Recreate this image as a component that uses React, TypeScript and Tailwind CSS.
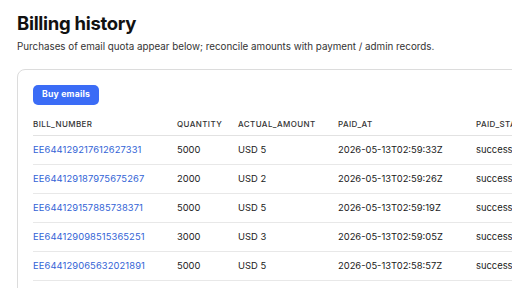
import React from "react";

const rows = [
  ["EE644129217612627331", "5000", "USD 5", "2026-05-13T02:59:33Z", "success"],
  ["EE644129187975675267", "2000", "USD 2", "2026-05-13T02:59:26Z", "success"],
  ["EE644129157885738371", "5000", "USD 5", "2026-05-13T02:59:19Z", "success"],
  ["EE644129098515365251", "3000", "USD 3", "2026-05-13T02:59:05Z", "success"],
  ["EE644129065632021891", "5000", "USD 5", "2026-05-13T02:58:57Z", "success"],
];

export default function App() {
  return (
    <div className="w-[512px] h-[288px] overflow-hidden bg-white text-[#111]" style={{ fontFamily: "Inter, 'Noto Sans', sans-serif" }}>
      <div className="pl-[17px] pt-[12px] w-[640px]">
        <h1 className="text-[18.5px] leading-[23px] font-bold tracking-[-0.3px] text-[#111]">Billing history</h1>
        <p className="mt-[5px] text-[9.8px] leading-[13px] text-[#333]">
          Purchases of email quota appear below; reconcile amounts with payment / admin records.
        </p>
        <div className="mt-[16px] border border-[#dcdcdc] rounded-[8px] pl-[15px] pt-[15px] pb-[20px]">
          <button className="flex items-center h-[20px] px-[9px] rounded-[5px] bg-[#3b6cf6] text-white text-[8.7px] font-bold tracking-[0.2px]">
            Buy emails
          </button>
          <table className="mt-[8px] border-collapse text-left" style={{ width: 560 }}>
            <thead>
              <tr className="h-[22px] border-b border-[#e2e2e2]">
                <th className="w-[144px] font-medium text-[8px] tracking-[0.4px] text-[#333] p-0">BILL_NUMBER</th>
                <th className="w-[61px] font-medium text-[8px] tracking-[0.4px] text-[#333] p-0">QUANTITY</th>
                <th className="w-[100px] font-medium text-[8px] tracking-[0.4px] text-[#333] p-0">ACTUAL_AMOUNT</th>
                <th className="w-[138px] font-medium text-[8px] tracking-[0.4px] text-[#333] p-0">PAID_AT</th>
                <th className="font-medium text-[8px] tracking-[0.4px] text-[#333] p-0">PAID_STATUS</th>
              </tr>
            </thead>
            <tbody>
              {rows.map((r) => (
                <tr key={r[0]} className="h-[29.2px] border-b border-[#e8e8e8]">
                  <td className="p-0 text-[9.4px] tracking-[0.1px] text-[#3263d6]">{r[0]}</td>
                  <td className="p-0 text-[9.4px] text-[#1a1a1a]">{r[1]}</td>
                  <td className="p-0 text-[9.4px] text-[#1a1a1a]">{r[2]}</td>
                  <td className="p-0 text-[9.4px] text-[#1a1a1a]">{r[3]}</td>
                  <td className="p-0 text-[9.4px] text-[#1a1a1a]">{r[4]}</td>
                </tr>
              ))}
            </tbody>
          </table>
        </div>
      </div>
    </div>
  );
}
